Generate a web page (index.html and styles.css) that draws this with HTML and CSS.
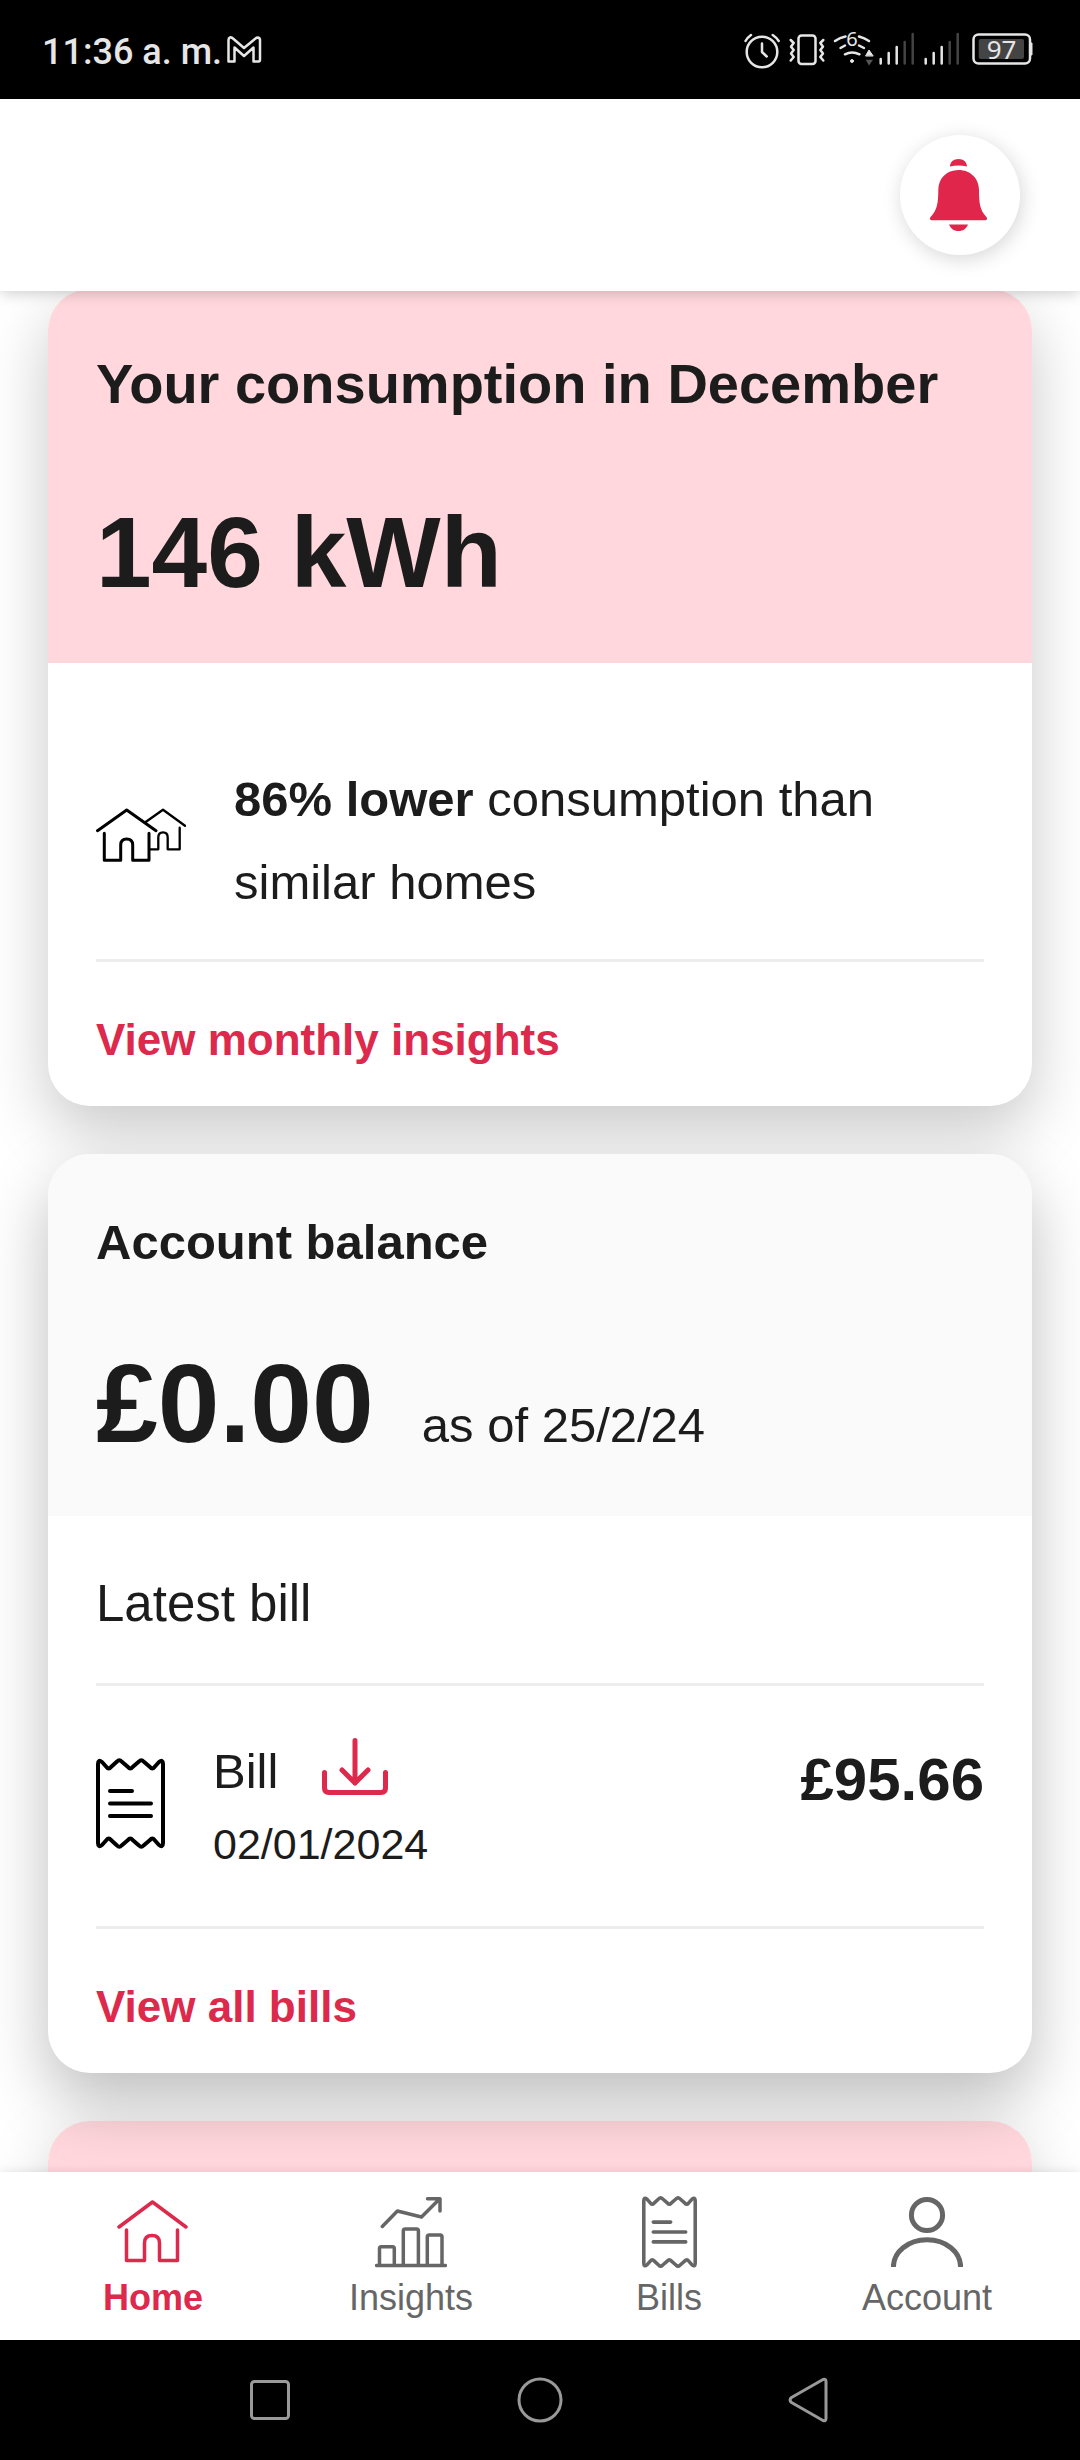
FILE: index.html
```html
<!DOCTYPE html>
<html lang="en">
	<head>
		<meta charset="utf-8">
		<meta name="viewport" content="width=device-width, initial-scale=1">
		<title>Home</title>
		<link rel="stylesheet" href="styles.css">
	</head>
	<body>
		<svg class="sprite" aria-hidden="true">
			<symbol id="receipt" viewBox="0 0 69 91">
				<path d="M2 6V85Q2 90 6 87L10.500 82Q12.700 79 15 82L21 87.500Q23.300 90 25.600 87.500L32 82Q34.300 79 36.600 82L43 87.500Q45.300 90 47.600 87.500L54 82Q56.300 79 58.500 82L63 87Q67 90 67 85V6Q67 1 63 4L58.500 9Q56.300 12 54 9L47.600 3.500Q45.300 1 43 3.500L36.600 9Q34.300 12 32 9L25.600 3.500Q23.300 1 21 3.500L15 9Q12.700 12 10.500 9L6 4Q2 1 2 6Z"/>
				<path d="M14 33H36M14 45.500H55M14 58H55"/>
			</symbol>
		</svg>

		<div class="status">
			<span class="time">11:36 a. m.</span>
			<svg class="mail" width="35" height="28" viewBox="0 0 35 28"><path d="M3 1.500Q1.500 2 1.500 4V25.500H7.500V11.500L17 20L26.500 11.500V25.500H31.500Q33 25.500 33 23.500V4Q33 2 31 1.500Q29.500 1.500 28.500 2.500L17 12L6 2.500Q4.500 1 3 1.500Z"/></svg>
			<div class="status-icons">
				<svg width="36" height="40" viewBox="44 30 36 40">
					<circle cx="62" cy="52" r="15.300"/>
					<path d="M62 43.500V52L66.700 56.500M45.500 41Q47.500 37.500 51 35M72.700 35Q76.500 37.500 78.700 41"/>
				</svg>
				<svg width="36" height="40" viewBox="89 30 36 40">
					<rect x="98.500" y="35.500" width="17" height="28.500" rx="3"/>
					<path d="M90.700 40L93.700 43L91 46.700L93.700 50L91 53.500L93.700 57L90.700 60.500M123.300 40L120.300 43L123 46.700L120.300 50L123 53.500L120.300 57L123.300 60.500"/>
				</svg>
				<svg width="36" height="40" viewBox="134 30 36 40">
					<path d="M135 41Q140 37.500 145.500 36.500M159 36.500Q164.500 38 169 41M140.500 48L145 45.500M159 45.500L164 48M145 54.300Q152 50.500 159.500 54.300"/>
					<circle class="solid" cx="152" cy="61" r="1.500"/>
					<text class="wifi-gen" x="152" y="46">6</text>
					<path class="solid" d="M165.700 55.700L169 50L173 55.700Z"/>
					<path class="dim" d="M165.700 59.700H173L169 65.500Z"/>
				</svg>
				<svg width="36" height="40" viewBox="179 30 36 40">
					<path d="M180.700 59V63.500M188.700 53V63.500M196.700 47V63.500"/>
					<path class="off" d="M204.700 42V63.500M212.700 34V63.500"/>
				</svg>
				<svg width="36" height="40" viewBox="179 30 36 40">
					<path d="M180.700 59V63.500M188.700 53V63.500M196.700 47V63.500"/>
					<path class="off" d="M204.700 42V63.500M212.700 34V63.500"/>
				</svg>
				<svg class="battery" width="61" height="40" viewBox="272 30 61 40">
					<rect x="273.500" y="34.500" width="56.500" height="29" rx="5"/>
					<rect class="charge" x="278.700" y="39" width="45.300" height="20" rx="2"/>
					<path class="solid" d="M331 43H332V55H331Z"/>
					<text x="301.500" y="59">97</text>
				</svg>
			</div>
		</div>

		<header class="top">
			<button class="bell" aria-label="Notifications">
				<svg width="120" height="120" viewBox="0 0 120 120">
					<path d="M50 31.500C50 27 53.500 24 58.500 24S67 27 67 31.500Q58.500 29.500 50 31.500Z"/>
					<path d="M58.500 35C46.500 35 38.300 43.500 38.300 55C38.300 68 37 75 31 81.500C29 83.500 30 85.300 32 85.300H85C87 85.300 88 83.500 86 81.500C80 75 79 68 79 55C79 43.500 70.500 35 58.500 35Z"/>
					<path d="M49 89.500H68C66 94 63 96 58.500 96S51 94 49 89.500Z"/>
				</svg>
			</button>
		</header>

		<main class="cards">
			<section class="card">
				<div class="card-head pink">
					<h1 class="card-title large">Your consumption in December</h1>
					<div class="amount">146 kWh</div>
				</div>
				<div class="card-body">
					<div class="compare">
						<svg class="houses" width="90" height="66" viewBox="0 0 90 66">
							<path d="M1.500 22.700L30.700 2L60 22.700M8.300 25.300V52.300H24.700V37Q24.700 31 30.700 31T36.700 37V52.300H53V25.300"/>
							<path class="far" d="M49.300 14.300L67 1.700L89 17.700M83.700 19.700V41.300H71.700V29.500Q71.700 24.300 67 24.300T62.300 29.500V41.300H54"/>
						</svg>
						<p><b>86% lower</b> consumption than similar homes</p>
					</div>
					<a class="more" href="#">View monthly insights</a>
				</div>
			</section>

			<section class="card front">
				<div class="card-head grey">
					<h2 class="card-title">Account balance</h2>
					<div class="balance">
						<span class="amount wide">£0.00</span>
						<span class="as-of">as of 25/2/24</span>
					</div>
				</div>
				<div class="card-body">
					<h3 class="latest">Latest bill</h3>
					<div class="bill">
						<svg class="receipt" width="69" height="91"><use href="#receipt"/></svg>
						<div class="bill-info">
							<div class="bill-name">
								<span>Bill</span>
								<button class="download" aria-label="Download bill">
									<svg width="66" height="58" viewBox="0 0 66 58"><path d="M33 2.500V45M20 32L33 45L46 32M2.500 34.500V50Q2.500 54.500 7 54.500H59Q63.500 54.500 63.500 50V34.500"/></svg>
								</button>
							</div>
							<div class="bill-date">02/01/2024</div>
						</div>
						<div class="bill-amount">£95.66</div>
					</div>
					<a class="more" href="#">View all bills</a>
				</div>
			</section>

			<section class="card">
				<div class="card-head pink"></div>
			</section>
		</main>

		<nav class="tabs">
			<a class="tab active" href="#">
				<svg width="72" height="72" viewBox="0 0 72 72"><path d="M2 31L35.500 6L69 31M9.500 34V64.500H27.500V47Q27.500 39.500 35 39.500T42.500 47V64.500H60.500V34"/></svg>
				Home
			</a>
			<a class="tab" href="#">
				<svg width="72" height="72" viewBox="0 0 72 72"><path d="M1.500 69.500H70.500M4.500 69V52.500Q4.500 50.700 6.300 50.700H17.500Q19.300 50.700 19.300 52.500V69M28.300 69V35Q28.300 33 30.300 33H41.500Q43.400 33 43.400 35V69M52.300 69V41Q52.300 39 54.300 39H65Q67 39 67 41V69M7.300 30.500L22.400 15L46.500 21L64.500 3M52.500 2.700H65V15"/></svg>
				Insights
			</a>
			<a class="tab" href="#">
				<svg class="small-receipt" width="55" height="72"><use href="#receipt"/></svg>
				Bills
			</a>
			<a class="tab" href="#">
				<svg class="person" width="72" height="72" viewBox="0 0 72 72"><circle cx="36" cy="19" r="15.600"/><path d="M2.400 71C2.400 56 17 43.700 36 43.700S69.600 56 69.600 71"/></svg>
				Account
			</a>
		</nav>

		<div class="system">
			<button aria-label="Recent apps"><svg width="46" height="46" viewBox="0 0 46 46"><rect x="4.500" y="4.500" width="37" height="37" rx="3"/></svg></button>
			<button aria-label="Home screen"><svg width="46" height="46" viewBox="0 0 46 46"><circle cx="23" cy="23" r="21"/></svg></button>
			<button aria-label="Back"><svg width="46" height="46" viewBox="0 0 46 46"><path d="M36 2.500L4.500 20.500Q1.500 23 4.500 25.500L36 43.500Q39 44.500 39 41.500V4.500Q39 1.500 36 2.500Z"/></svg></button>
		</div>
	</body>
</html>
```
FILE: styles.css
```css
* { box-sizing: border-box; }
html, body { margin: 0; padding: 0; }
body {
	display: flex;
	flex-direction: column;
	height: 100vh;
	overflow: hidden;
	background-color: #FFF;
	color: #1c1c1c;
	font-family: "Liberation Sans", Arial, sans-serif;
	font-size: 49px;
}
h1, h2, h3, p { margin: 0; }
a { text-decoration: none; }
button { border: 0; padding: 0; background: none; cursor: pointer; }
svg { display: block; flex: none; fill: none; stroke-linecap: round; stroke-linejoin: round; }
.sprite { position: absolute; width: 0; height: 0; }

/* phone status bar */
.status {
	display: flex;
	align-items: center;
	flex: none;
	height: 99px;
	padding: 0 47px 0 42px;
	background-color: #000;
	color: #e6e6e6;
	font-family: Roboto, sans-serif;
	font-size: 36px;
	font-weight: 500;
}
.time { padding-top: 4px; }
.status svg { stroke: #e6e6e6; stroke-width: 2.5; overflow: visible; }
.mail { margin-left: 5px; }
.status-icons { display: flex; gap: 9px; margin-left: auto; }
.battery { margin-left: 3px; }
.status text {
	fill: #e6e6e6;
	stroke: none;
	text-anchor: middle;
	font-family: "Noto Sans", sans-serif;
	font-size: 26px;
	font-weight: 400;
}
.status .wifi-gen { font-size: 20px; }
.status .solid { fill: #e6e6e6; stroke-width: 1; }
.status .dim { fill: #555; stroke: none; }
.status .off { stroke: #444; }
.status .charge { fill: #444; stroke: none; }

.top {
	display: flex;
	justify-content: flex-end;
	flex: none;
	padding: 36px 60px;
	background-color: #FFF;
	box-shadow: 0 2px 14px rgba(0, 0, 0, 0.2);
	z-index: 2;
}
.bell { border-radius: 50%; background-color: #FFF; box-shadow: 2px 4px 20px rgba(0, 0, 0, 0.16); }
.bell svg { fill: #e0264b; }

.cards {
	display: flex;
	flex-direction: column;
	flex: 1;
	gap: 48px;
	min-height: 0;
	margin-top: -2px;
	padding: 0 48px;
	overflow: hidden;
}
.card {
	flex: none;
	border-radius: 42px;
	background-color: #FFF;
	box-shadow: 0 24px 64px rgba(0, 0, 0, 0.22);
}
.front { z-index: 1; box-shadow: 0 28px 64px rgba(0, 0, 0, 0.26); }
.card-head { min-height: 120px; padding: 60px 48px 50px; border-radius: 42px 42px 0 0; }
.pink { background-color: #ffd7dc; }
.grey { background-color: #fafafa; }
.card-title { margin-bottom: 72px; font-size: 49px; line-height: 56px; }
.large { font-size: 56px; line-height: 70px; }
.amount { font-size: 100px; font-weight: bold; line-height: 122px; }
.wide { font-size: 111px; line-height: 124px; }
.balance { display: flex; align-items: baseline; gap: 48px; }
.as-of { line-height: 60px; }

.card-body { padding: 0 48px; }
.compare {
	display: flex;
	align-items: center;
	gap: 48px;
	padding: 95px 0 35px;
	border-bottom: 3px solid #ededed;
	line-height: 83px;
}
.houses { stroke: #000; stroke-width: 3; }
.far { stroke-width: 2.3; }
.more {
	display: block;
	padding: 48px 0 36px;
	color: #dc294c;
	font-size: 44px;
	font-weight: bold;
	line-height: 60px;
}

.latest {
	padding: 56px 0 47px;
	border-bottom: 3px solid #ededed;
	font-size: 51px;
	font-weight: normal;
	line-height: 64px;
}
.bill { display: flex; padding: 52px 0; border-bottom: 3px solid #ededed; }
.receipt { margin: 20px 48px 0 0; stroke: #000; stroke-width: 4; }
.bill-name { display: flex; align-items: flex-start; gap: 44px; margin-bottom: 10px; line-height: 66px; }
.download svg { stroke: #dc294c; stroke-width: 5; }
.bill-date { font-size: 43px; line-height: 60px; }
.bill-amount { margin-left: auto; font-size: 60px; font-weight: bold; line-height: 84px; }

.tabs {
	display: grid;
	grid-template-columns: repeat(4, 1fr);
	flex: none;
	padding: 24px 24px 20px;
	background-color: #FFF;
	box-shadow: 0 0 10px rgba(0, 0, 0, 0.1);
	z-index: 2;
}
.tab {
	display: flex;
	flex-direction: column;
	align-items: center;
	gap: 8px;
	color: #666;
	font-size: 36px;
	line-height: 44px;
}
.tab svg { stroke: currentColor; stroke-width: 3.5; }
.tab .small-receipt { stroke-width: 4.5; }
.tab .person { stroke-width: 5; stroke-linecap: butt; }
.active { color: #dc294c; font-weight: bold; }

/* phone navigation buttons */
.system {
	display: grid;
	grid-template-columns: repeat(3, 1fr);
	flex: none;
	height: 120px;
	padding: 0 12.5%;
	background-color: #000;
}
.system button { display: flex; align-items: center; justify-content: center; }
.system svg { stroke: #999; stroke-width: 3; }
```
